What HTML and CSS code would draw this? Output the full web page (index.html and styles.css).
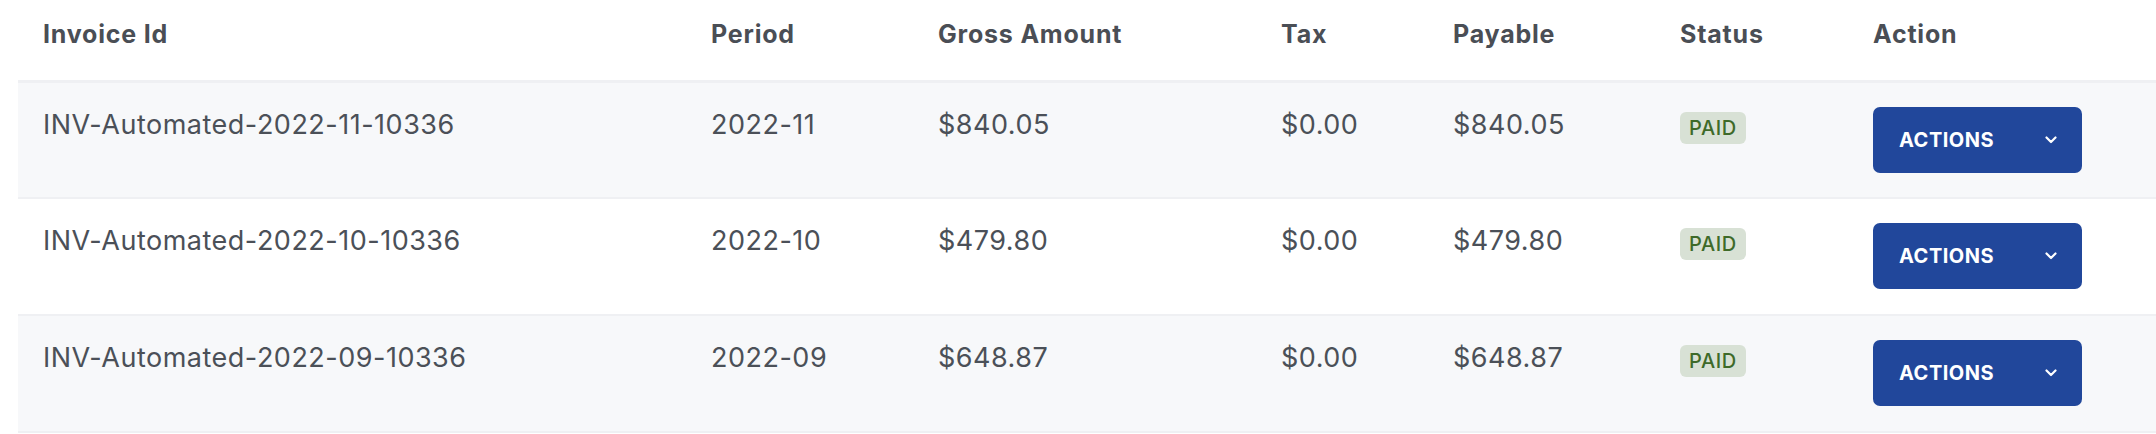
FILE: index.html
```html
<!DOCTYPE html>
<html>
<head>
<meta charset="utf-8">
<link rel="stylesheet" href="styles.css">
</head>
<body>
<div class="wrap">
<table class="invoices">
  <colgroup>
    <col class="c-id"><col class="c-period"><col class="c-gross"><col class="c-tax"><col class="c-pay"><col class="c-status"><col class="c-action">
  </colgroup>
  <thead>
    <tr><th>Invoice Id</th><th>Period</th><th>Gross Amount</th><th>Tax</th><th>Payable</th><th>Status</th><th>Action</th></tr>
  </thead>
  <tbody>
    <tr class="alt">
      <td>INV-Automated-2022-11-10336</td><td>2022-11</td><td>$840.05</td><td>$0.00</td><td>$840.05</td>
      <td><span class="badge">PAID</span></td>
      <td><button class="btn">ACTIONS <svg class="chev" width="12" height="8" viewBox="0 0 12 8"><path d="M1.5 1.5 L6 6 L10.5 1.5" fill="none" stroke="#fff" stroke-width="2.2" stroke-linecap="round" stroke-linejoin="round"/></svg></button></td>
    </tr>
    <tr>
      <td>INV-Automated-2022-10-10336</td><td>2022-10</td><td>$479.80</td><td>$0.00</td><td>$479.80</td>
      <td><span class="badge">PAID</span></td>
      <td><button class="btn">ACTIONS <svg class="chev" width="12" height="8" viewBox="0 0 12 8"><path d="M1.5 1.5 L6 6 L10.5 1.5" fill="none" stroke="#fff" stroke-width="2.2" stroke-linecap="round" stroke-linejoin="round"/></svg></button></td>
    </tr>
    <tr class="alt">
      <td>INV-Automated-2022-09-10336</td><td>2022-09</td><td>$648.87</td><td>$0.00</td><td>$648.87</td>
      <td><span class="badge">PAID</span></td>
      <td><button class="btn">ACTIONS <svg class="chev" width="12" height="8" viewBox="0 0 12 8"><path d="M1.5 1.5 L6 6 L10.5 1.5" fill="none" stroke="#fff" stroke-width="2.2" stroke-linecap="round" stroke-linejoin="round"/></svg></button></td>
    </tr>
  </tbody>
</table>
</div>
</body>
</html>
```
FILE: styles.css
```css
html, body { margin: 0; padding: 0; background: #fff; }
body { font-family: Inter, "Noto Sans", sans-serif; color: #4b5058; overflow: hidden; }
.wrap { padding-left: 18px; width: 2138px; overflow: hidden; }
.invoices { border-collapse: collapse; table-layout: fixed; width: 2138px; }
.c-id { width: 668px; }
.c-period { width: 227px; }
.c-gross { width: 343px; }
.c-tax { width: 172px; }
.c-pay { width: 227px; }
.c-status { width: 193px; }
.c-action { width: 308px; }
.invoices th {
  text-align: left; font-weight: 700; font-size: 25px; line-height: 34px;
  letter-spacing: 0.8px;
  color: #4a4e55; height: 81px; box-sizing: border-box;
  padding: 17px 0 0 25px; vertical-align: top;
  border-bottom: 3px solid #eff0f3;
}
.invoices td {
  font-size: 27px; line-height: 40px; letter-spacing: 0.5px; vertical-align: top;
  padding: 22px 0 0 25px; height: 117px; box-sizing: border-box;
  border-bottom: 2px solid #eff0f3; white-space: nowrap; color: #4b5058;
}
.invoices tr.alt td { background: #f7f8fa; }
.badge {
  display: inline-flex; align-items: center; height: 32px; padding: 0 9px;
  margin-top: 7px; border-radius: 6px; background: #d8e1d5; color: #3e6a29;
  font-size: 20px; font-weight: 500; letter-spacing: 0.6px; line-height: 1;
}
.btn {
  display: flex; align-items: center; justify-content: space-between;
  width: 209px; height: 66px; margin-top: 2px; padding: 0 25px 0 26px;
  border: 0; border-radius: 7px; background: #21479b; color: #fff;
  font-family: Inter, "Noto Sans", sans-serif; font-size: 20px; font-weight: 700;
  letter-spacing: 0.5px; cursor: pointer;
}
.chev { display: block; }
```
